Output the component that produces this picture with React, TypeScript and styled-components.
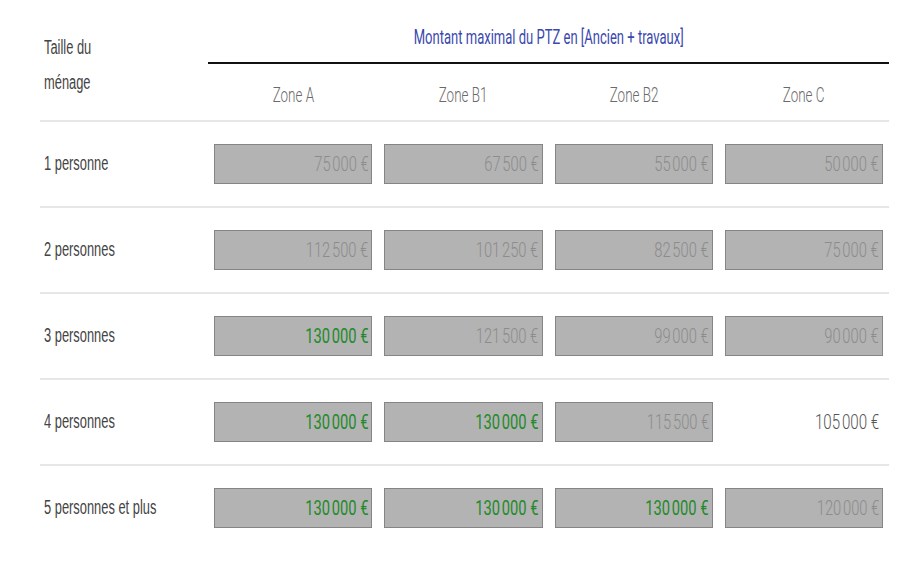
import React from "react";
import styled, { createGlobalStyle } from "styled-components";

const Global = createGlobalStyle`
  html, body { margin: 0; padding: 0; background: #ffffff; }
  body { font-family: "Liberation Sans", Arial, sans-serif; }
`;

const Page = styled.div`
  width: 906px;
  height: 568px;
  background: #fff;
  overflow: hidden;
`;

const Table = styled.div`
  margin-left: 40px;
  width: 849px;
  display: flex;
  flex-direction: column;
`;

const HeaderRow = styled.div`
  display: flex;
  height: 120px;
  border-bottom: 2px solid #e6e6e6;
`;

const LabelHead = styled.div`
  width: 168px;
  flex: none;
  padding: 30px 0 0 4px;
  box-sizing: border-box;
  color: #444;
  font-family: "Liberation Sans", Arial, sans-serif;
  font-size: 19.5px;
  line-height: 35px;
`;

const ZoneHeads = styled.div`
  flex: 1;
  display: flex;
  flex-direction: column;
`;

const Title = styled.div`
  height: 64px;
  border-bottom: 2px solid #111;
  display: flex;
  align-items: flex-end;
  justify-content: center;
  padding-bottom: 14px;
  box-sizing: border-box;
  line-height: 22px;
  color: #3a48ae;
  font-family: Roboto, "Liberation Sans", sans-serif;
  font-size: 21px;
  font-weight: 400;
`;

const Zones = styled.div`
  flex: 1;
  display: grid;
  grid-template-columns: repeat(4, 1fr);
`;

const ZoneCell = styled.div`
  display: flex;
  align-items: center;
  justify-content: center;
  padding-top: 5px;
  color: #6a6a6a;
  font-family: Roboto, "Liberation Sans", sans-serif;
  font-size: 21px;
  font-weight: 300;
`;

const Row = styled.div<{ $last?: boolean }>`
  display: grid;
  grid-template-columns: 168px repeat(4, 1fr);
  height: 84px;
  border-bottom: ${(p) => (p.$last ? "none" : "2px solid #e6e6e6")};
`;

const RowLabel = styled.div`
  display: flex;
  align-items: center;
  padding: 0 0 2px 4px;
  color: #444;
  font-family: "Liberation Sans", Arial, sans-serif;
  font-size: 19.5px;
`;

const Cell = styled.div`
  display: flex;
  align-items: center;
  padding: 0 6px;
`;

const Box = styled.div<{ $green?: boolean }>`
  flex: 1;
  height: 40px;
  box-sizing: border-box;
  background: #b3b3b3;
  border: 1.5px solid #858585;
  display: flex;
  align-items: center;
  justify-content: flex-end;
  padding-right: 3px;
  color: ${(p) => (p.$green ? "#1f8a2a" : "#8c8c8c")};
  font-family: Roboto, "Liberation Sans", sans-serif;
  font-size: 21px;
  font-weight: ${(p) => (p.$green ? 400 : 300)};
`;

const Plain = styled.div`
  flex: 1;
  height: 40px;
  display: flex;
  align-items: center;
  justify-content: flex-end;
  padding-right: 4px;
  color: #555;
  font-family: Roboto, "Liberation Sans", sans-serif;
  font-size: 21px;
  font-weight: 300;
`;

const Squeeze = styled.span<{ $sx: number; $origin: string }>`
  display: inline-block;
  white-space: nowrap;
  transform: scaleX(${(p) => p.$sx});
  transform-origin: ${(p) => p.$origin};
`;

type V = { v: string; s: "grey" | "green" | "plain" };

const rows: { label: string; vals: V[] }[] = [
  {
    label: "1 personne",
    vals: [
      { v: "75\u202f000\u00a0€", s: "grey" },
      { v: "67\u202f500\u00a0€", s: "grey" },
      { v: "55\u202f000\u00a0€", s: "grey" },
      { v: "50\u202f000\u00a0€", s: "grey" },
    ],
  },
  {
    label: "2 personnes",
    vals: [
      { v: "112\u202f500\u00a0€", s: "grey" },
      { v: "101\u202f250\u00a0€", s: "grey" },
      { v: "82\u202f500\u00a0€", s: "grey" },
      { v: "75\u202f000\u00a0€", s: "grey" },
    ],
  },
  {
    label: "3 personnes",
    vals: [
      { v: "130\u202f000\u00a0€", s: "green" },
      { v: "121\u202f500\u00a0€", s: "grey" },
      { v: "99\u202f000\u00a0€", s: "grey" },
      { v: "90\u202f000\u00a0€", s: "grey" },
    ],
  },
  {
    label: "4 personnes",
    vals: [
      { v: "130\u202f000\u00a0€", s: "green" },
      { v: "130\u202f000\u00a0€", s: "green" },
      { v: "115\u202f500\u00a0€", s: "grey" },
      { v: "105\u202f000\u00a0€", s: "plain" },
    ],
  },
  {
    label: "5 personnes et plus",
    vals: [
      { v: "130\u202f000\u00a0€", s: "green" },
      { v: "130\u202f000\u00a0€", s: "green" },
      { v: "130\u202f000\u00a0€", s: "green" },
      { v: "120\u202f000\u00a0€", s: "grey" },
    ],
  },
];

const zones = ["Zone A", "Zone B1", "Zone B2", "Zone C"];

export default function App() {
  return (
    <Page>
      <Global />
      <Table>
        <HeaderRow>
          <LabelHead>
            <Squeeze $sx={0.66} $origin="left">Taille du</Squeeze>
            <br />
            <Squeeze $sx={0.66} $origin="left">ménage</Squeeze>
          </LabelHead>
          <ZoneHeads>
            <Title>
              <Squeeze $sx={0.62} $origin="center">
                Montant maximal du PTZ en [Ancien + travaux]
              </Squeeze>
            </Title>
            <Zones>
              {zones.map((z) => (
                <ZoneCell key={z}>
                  <Squeeze $sx={0.64} $origin="center">{z}</Squeeze>
                </ZoneCell>
              ))}
            </Zones>
          </ZoneHeads>
        </HeaderRow>
        {rows.map((r, i) => (
          <Row key={r.label} $last={i === rows.length - 1}>
            <RowLabel>
              <Squeeze $sx={0.66} $origin="left">{r.label}</Squeeze>
            </RowLabel>
            {r.vals.map((c, j) => (
              <Cell key={j}>
                {c.s === "plain" ? (
                  <Plain>
                    <Squeeze $sx={0.72} $origin="right">{c.v}</Squeeze>
                  </Plain>
                ) : (
                  <Box $green={c.s === "green"}>
                    <Squeeze $sx={0.7} $origin="right">{c.v}</Squeeze>
                  </Box>
                )}
              </Cell>
            ))}
          </Row>
        ))}
      </Table>
    </Page>
  );
}
